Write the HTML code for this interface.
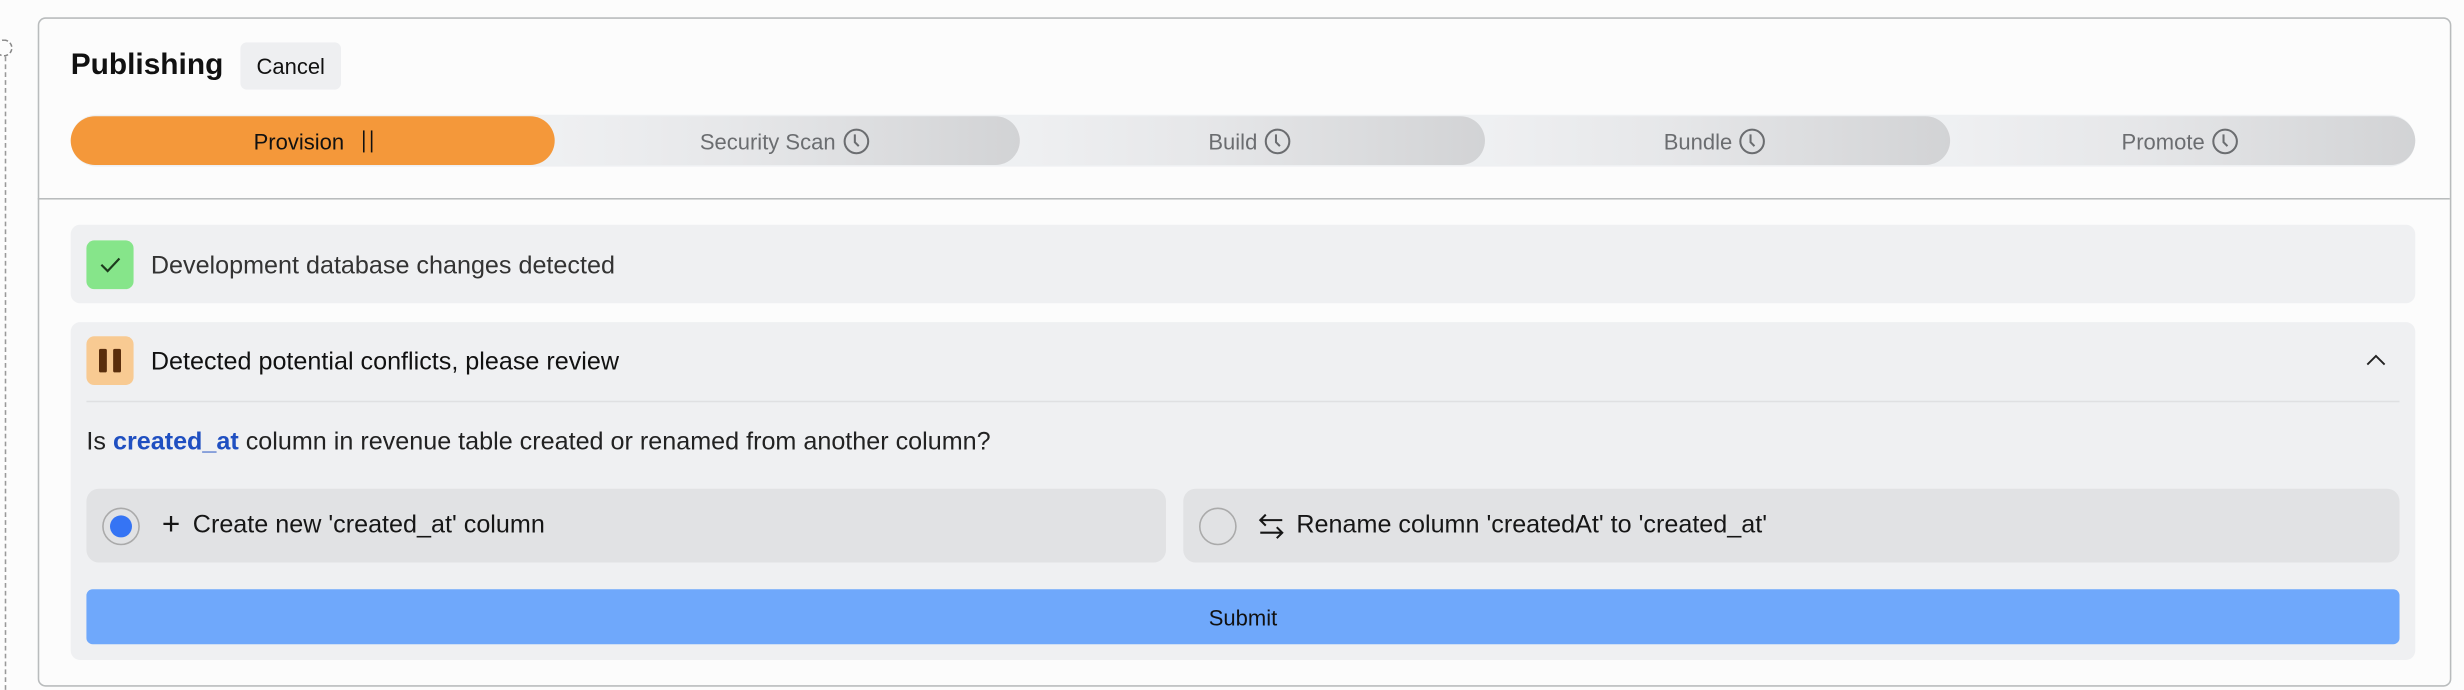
<!DOCTYPE html>
<html><head><meta charset="utf-8"><style>
*{box-sizing:border-box;margin:0;padding:0}
html,body{width:2464px;height:690px;overflow:hidden;background:#fcfcfc;font-family:"Liberation Sans",sans-serif}
#s{position:absolute;left:0;top:0;width:1568px;height:439px;transform:scale(1.5714);transform-origin:0 0}
.a{position:absolute}
.card{left:23.5px;top:11px;width:1536px;height:425.5px;border:1.5px solid #b9bcbd;border-radius:5px;background:#fcfcfc}
.seg{position:absolute;top:74px;height:31px;border-radius:16px;display:flex;align-items:center;justify-content:center;font-size:14px;color:#6b6d70;background:linear-gradient(90deg,#eff0f2,#e6e7e9 40%,#d2d3d5)}
.row{left:45px;width:1492px;background:#eff0f2;border-radius:6px}
.ico{position:absolute;width:30px;height:31px;border-radius:5px}
.opt{position:absolute;top:311px;height:47px;background:#e1e2e4;border-radius:8px;display:flex;align-items:center;font-size:16px;color:#161616}
.rad{width:24px;height:24px;border-radius:50%;border:1.5px solid #aaa;margin-left:10px;margin-right:12px;display:flex;align-items:center;justify-content:center}
</style></head><body><div id="s">
<div class="a" style="left:3px;top:36px;height:403px;border-left:1px dashed #999"></div>
<div class="a" style="left:-3px;top:25px;width:11px;height:11px;border:1px dashed #888;border-radius:50%"></div>
<div class="a card"></div>
<div class="a" style="left:45px;top:30px;font-size:19px;font-weight:bold;color:#111;line-height:24px">Publishing</div>
<div class="a" style="left:153px;top:27px;width:64px;height:30px;background:#eeeff1;border-radius:4px;font-size:14px;line-height:31px;text-align:center;color:#111">Cancel</div>
<div class="a" style="left:45px;top:73px;width:1492px;height:33px;border-radius:17px;background:#eef0f2"></div>
<div class="seg" style="left:1238px;width:299px;z-index:1">Promote&nbsp;<svg width="18" height="18" viewBox="0 0 18 18"><circle cx="9" cy="9" r="7.5" fill="none" stroke="#6b6d70" stroke-width="1.3"/><path d="M8 4.5v5l2.5 2.5" fill="none" stroke="#6b6d70" stroke-width="1.3"/></svg></div>
<div class="seg" style="left:942px;width:299px;z-index:2">Bundle&nbsp;<svg width="18" height="18" viewBox="0 0 18 18"><circle cx="9" cy="9" r="7.5" fill="none" stroke="#6b6d70" stroke-width="1.3"/><path d="M8 4.5v5l2.5 2.5" fill="none" stroke="#6b6d70" stroke-width="1.3"/></svg></div>
<div class="seg" style="left:646px;width:299px;z-index:3">Build&nbsp;<svg width="18" height="18" viewBox="0 0 18 18"><circle cx="9" cy="9" r="7.5" fill="none" stroke="#6b6d70" stroke-width="1.3"/><path d="M8 4.5v5l2.5 2.5" fill="none" stroke="#6b6d70" stroke-width="1.3"/></svg></div>
<div class="seg" style="left:350px;width:299px;z-index:4">Security Scan&nbsp;<svg width="18" height="18" viewBox="0 0 18 18"><circle cx="9" cy="9" r="7.5" fill="none" stroke="#6b6d70" stroke-width="1.3"/><path d="M8 4.5v5l2.5 2.5" fill="none" stroke="#6b6d70" stroke-width="1.3"/></svg></div>
<div class="seg" style="left:45px;width:308px;z-index:5;background:#f4983a;color:#111">Provision&nbsp;&nbsp;&nbsp;<span style="display:inline-block;height:14px;border-left:1px solid #111;border-right:1px solid #111;width:6px"></span></div>
<div class="a" style="left:24px;top:126px;width:1535px;border-top:1.5px solid #b9bcbd"></div>
<div class="a row" style="top:143px;height:50px"></div>
<div class="ico" style="left:55px;top:153px;background:#86e58a"><svg width="30" height="31" viewBox="0 0 30 31"><path d="M9.5 15.5l4 4 7.5-8" fill="none" stroke="#1d3a1d" stroke-width="1.4"/></svg></div>
<div class="a" style="left:96px;top:160px;font-size:16px;color:#333;line-height:20px">Development database changes detected</div>
<div class="a row" style="top:205px;height:215px"></div>
<div class="ico" style="left:55px;top:214px;background:#f8ca92"><div class="a" style="left:8px;top:8px;width:5px;height:15px;background:#5a2e0c;border-radius:1px"></div><div class="a" style="left:17px;top:8px;width:5px;height:15px;background:#5a2e0c;border-radius:1px"></div></div>
<div class="a" style="left:96px;top:221px;font-size:16px;color:#111;line-height:20px">Detected potential conflicts, please review</div>
<svg class="a" style="left:1505px;top:223px" width="14" height="12" viewBox="0 0 14 12"><path d="M1.5 9l5.5-5.5 5.5 5.5" fill="none" stroke="#222" stroke-width="1.2"/></svg>
<div class="a" style="left:55px;top:255px;width:1472px;border-top:1.5px solid #dfe0e2"></div>
<div class="a" style="left:55px;top:272px;font-size:16px;color:#222;line-height:20px">Is <b style="color:#1f4fc1">created_at</b> column in revenue table created or renamed from another column?</div>
<div class="opt" style="left:55px;width:687px"><div class="rad" style="margin-right:14px"><div style="width:14px;height:14px;border-radius:50%;background:#3574f4"></div></div><span style="font-size:20px;margin-right:8px;font-weight:300">+</span>Create new 'created_at' column</div>
<div class="opt" style="left:753px;width:774px"><div class="rad"></div><svg width="20" height="20" viewBox="0 0 20 20" style="margin-right:6px"><path d="M17 6H3M6.5 2.5L3 6l3.5 3.5M3 14h14M13.5 10.5L17 14l-3.5 3.5" fill="none" stroke="#161616" stroke-width="1.3"/></svg>Rename column 'createdAt' to 'created_at'</div>
<div class="a" style="left:55px;top:375px;width:1472px;height:35px;background:#6fa8fb;border-radius:4px;font-size:14px;line-height:36px;text-align:center;color:#111">Submit</div>
</div></body></html>
